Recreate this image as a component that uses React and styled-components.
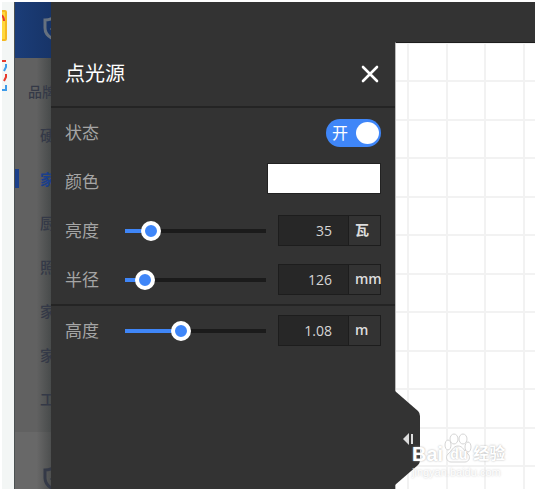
import { useState } from "react";
import styled, { createGlobalStyle } from "styled-components";

const NAV_ITEMS = ["硬", "家", "厨", "照", "家", "家", "工"];

const SLIDERS = [
  { id: "brightness", label: "亮度", value: "35", unit: "瓦", position: 13 },
  { id: "radius", label: "半径", value: "126", unit: "mm", position: 8 },
];

const ShieldIcon = () => (
  <svg width="28" height="28" viewBox="0 0 28 28" fill="none" stroke="currentColor" strokeWidth="3">
    <path d="M14 2 C10 5 6 6 3 6 V14 C3 20 8 24 14 26 C20 24 25 20 25 14 V6 C22 6 18 5 14 2 Z" />
    <path d="M9 14 L13 18 L20 10" />
  </svg>
);

const SliderRow = ({ id, label, value, unit, position }) => {
  const [percent, setPercent] = useState(position);
  const [amount, setAmount] = useState(value);

  return (
    <Row>
      <Label htmlFor={id}>{label}</Label>
      <Range
        id={id}
        type="range"
        min="0"
        max="100"
        value={percent}
        onChange={(e) => setPercent(e.target.value)}
        style={{ "--fill": `${percent}%` }}
      />
      <Field>
        <NumberInput
          aria-label={label}
          value={amount}
          onChange={(e) => setAmount(e.target.value)}
        />
        <Unit>{unit}</Unit>
      </Field>
    </Row>
  );
};

const App = () => {
  const [on, setOn] = useState(true);
  const [color, setColor] = useState("#ffffff");

  return (
    <>
      <GlobalStyle />
      <Page>
        <Dock>
          <svg width="12" height="100" viewBox="0 0 12 100">
            <rect x="-14" y="9" width="18" height="29" rx="1" fill="#ffd83d" stroke="#f5b921" strokeWidth="2" />
            <path d="M-1 13 C1 14 2 16 2 19" fill="none" stroke="#e8392c" strokeWidth="2" />
            <path d="M0 59 H4" stroke="#e8392c" strokeWidth="2" />
            <path d="M4 62 V65 L2 69" fill="none" stroke="#3d9be9" strokeWidth="2" />
            <path d="M4 72 V75 L2 79" fill="none" stroke="#e8392c" strokeWidth="2" />
            <path d="M4 83 V88 H0" fill="none" stroke="#3d9be9" strokeWidth="2" />
          </svg>
        </Dock>
        <Sidebar>
          <Brand>
            <ShieldIcon />
          </Brand>
          <Nav>
            <NavTitle>品牌</NavTitle>
            {NAV_ITEMS.map((item, index) => (
              <NavLink key={index} href="#" $active={index === 1}>
                {item}
              </NavLink>
            ))}
          </Nav>
          <SidebarFooter>
            <ShieldIcon />
          </SidebarFooter>
        </Sidebar>
        <Workspace>
          <TopBar />
          <Panel>
            <PanelHeader>
              <Title>点光源</Title>
              <CloseButton aria-label="关闭">
                <svg width="18" height="18" viewBox="0 0 18 18">
                  <path d="M2 2 L16 16 M16 2 L2 16" stroke="#fff" strokeWidth="2.6" strokeLinecap="round" />
                </svg>
              </CloseButton>
            </PanelHeader>
            <Section>
              <Row>
                <Label htmlFor="state">状态</Label>
                <Switch $on={on}>
                  <input
                    id="state"
                    type="checkbox"
                    checked={on}
                    onChange={(e) => setOn(e.target.checked)}
                  />
                  <span>{on ? "开" : "关"}</span>
                  <Knob />
                </Switch>
              </Row>
              <Row>
                <Label htmlFor="color">颜色</Label>
                <ColorInput
                  id="color"
                  type="color"
                  value={color}
                  onChange={(e) => setColor(e.target.value)}
                />
              </Row>
              {SLIDERS.map((slider) => (
                <SliderRow key={slider.id} {...slider} />
              ))}
            </Section>
            <Section>
              <SliderRow id="height" label="高度" value="1.08" unit="m" position={38} />
            </Section>
          </Panel>
          <Canvas>
            <CollapseButton aria-label="收起">
              <svg width="25" height="98" viewBox="0 0 25 98">
                <path d="M0 0 L23 20 Q25 22 25 25 V69 Q25 72 23 74 L0 94 Z" fill="#333" />
                <path d="M8 48 L14 42 V54 Z" fill="#ddd" />
                <path d="M17 43 V53" stroke="#ddd" strokeWidth="2" />
              </svg>
            </CollapseButton>
            <Watermark>
              <WatermarkLogo>
                <span>Bai</span>
                <Paw>
                  <svg width="28" height="30" viewBox="0 0 28 30">
                    <ellipse cx="4" cy="12" rx="3" ry="5" />
                    <ellipse cx="10" cy="6" rx="4" ry="5" />
                    <ellipse cx="19" cy="6" rx="4" ry="5" />
                    <ellipse cx="24" cy="14" rx="3" ry="5" />
                    <path d="M14 13 C9 13 8 18 4 21 C1 24 3 29 7 29 H21 C25 29 27 24 24 21 C20 18 19 13 14 13 Z" />
                  </svg>
                  <span>du</span>
                </Paw>
                <WatermarkName>经验</WatermarkName>
              </WatermarkLogo>
              <WatermarkUrl>jingyan.baidu.com</WatermarkUrl>
            </Watermark>
          </Canvas>
        </Workspace>
      </Page>
    </>
  );
};

const GlobalStyle = createGlobalStyle`
  * {
    box-sizing: border-box;
  }

  body {
    margin: 0;
    background: #fff;
    font-family: "Open Sans", "Noto Sans CJK SC", sans-serif;
  }

  svg {
    display: block;
    flex-shrink: 0;
  }

  button,
  input {
    font-family: inherit;
  }
`;

const Page = styled.div`
  display: grid;
  grid-template-columns: 12px 37px 1fr;
  height: 100vh;
  padding: 2px;
`;

const Dock = styled.aside`
  background: #f3f6f5;
`;

const Sidebar = styled.aside`
  display: flex;
  flex-direction: column;
  min-height: 0;
  overflow: hidden;
  border-left: 1px solid #4b5152;
  background: #646464;
  color: #343947;
`;

const Brand = styled.div`
  flex-shrink: 0;
  height: 56px;
  padding: 12px 0 0 27px;
  background: linear-gradient(90deg, #1b3d78, #173468);
  color: #66717f;
`;

const Nav = styled.nav`
  display: flex;
  flex-direction: column;
  flex-shrink: 0;
  padding-bottom: 12px;
  background: linear-gradient(90deg, #616161 60%, #484b4b);
`;

const NavTitle = styled.div`
  height: 54px;
  padding-left: 13px;
  font-size: 14px;
  font-weight: 500;
  line-height: 68px;
  white-space: nowrap;
`;

const NavLink = styled.a`
  display: flex;
  align-items: center;
  height: 44px;
  padding-left: 25px;
  background: ${(props) =>
    props.$active ? "linear-gradient(#1b3f8a, #1b3f8a) 0 50% / 4px 19px no-repeat" : "none"};
  color: ${(props) => (props.$active ? "#1b3f8a" : "inherit")};
  font-size: 15px;
  font-weight: ${(props) => (props.$active ? 700 : 500)};
  text-decoration: none;
  white-space: nowrap;
`;

const SidebarFooter = styled.div`
  flex: 1;
  padding: 32px 0 0 27px;
  background: linear-gradient(90deg, #686868 60%, #4d4f4f);
`;

const Workspace = styled.main`
  display: grid;
  grid-template-columns: 344px 1fr;
  grid-template-rows: 40px 1fr;
  min-width: 0;
`;

const TopBar = styled.header`
  grid-column: 1 / -1;
  background: #333;
`;

const Panel = styled.section`
  background: #333;
`;

const PanelHeader = styled.header`
  display: flex;
  align-items: center;
  justify-content: space-between;
  height: 64px;
  padding: 0 16px 0 14px;
`;

const Title = styled.h1`
  margin: 0;
  color: #fff;
  font-size: 20px;
  font-weight: 400;
  line-height: 28px;
`;

const CloseButton = styled.button`
  padding: 0;
  border: 0;
  background: none;
  cursor: pointer;
`;

const Section = styled.div`
  padding: 0 14px;
  border-top: 2px solid #242424;
`;

const Row = styled.div`
  display: flex;
  align-items: center;
  height: 49px;
`;

const Label = styled.label`
  width: 60px;
  color: #a5a5a5;
  font-size: 17px;
  line-height: 24px;
`;

const Switch = styled.div`
  position: relative;
  display: flex;
  align-items: center;
  justify-content: space-between;
  width: 55px;
  height: 28px;
  margin-left: auto;
  padding: 0 2px 0 6px;
  border-radius: 14px;
  background: ${(props) => (props.$on ? "#3f86f8" : "#666")};
  color: #fff;
  font-size: 16px;
  line-height: 24px;

  input {
    position: absolute;
    inset: 0;
    width: 100%;
    height: 100%;
    margin: 0;
    opacity: 0;
    cursor: pointer;
  }
`;

const Knob = styled.i`
  width: 23px;
  height: 22px;
  border-radius: 50%;
  background: #fff;
`;

const ColorInput = styled.input`
  width: 114px;
  height: 31px;
  margin: 0 0 6px auto;
  padding: 0;
  border: 1px solid #222;
  background: none;

  &::-webkit-color-swatch-wrapper {
    padding: 0;
  }

  &::-webkit-color-swatch {
    border: 0;
  }
`;

const Range = styled.input`
  flex: 1;
  min-width: 0;
  height: 20px;
  margin: 0 12px 0 0;
  appearance: none;
  background: linear-gradient(#3f86f8, #3f86f8) 0 50% / var(--fill) 4px no-repeat,
    linear-gradient(#1b1b1b, #1b1b1b) 0 50% / 100% 4px no-repeat;

  &::-webkit-slider-thumb {
    appearance: none;
    width: 20px;
    height: 20px;
    border: 4px solid #fff;
    border-radius: 50%;
    background: #3f86f8;
  }
`;

const Field = styled.div`
  display: flex;
  width: 103px;
  height: 31px;
  border: 1px solid #1d1d1d;
`;

const NumberInput = styled.input`
  width: 70px;
  padding: 0 16px 0 0;
  border: 0;
  border-right: 1px solid #1d1d1d;
  background: #272727;
  color: #d5d5d5;
  font-size: 14px;
  text-align: right;
`;

const Unit = styled.span`
  padding-left: 6px;
  color: #ddd;
  font-size: 14px;
  font-weight: 600;
  line-height: 28px;
`;

const Canvas = styled.div`
  position: relative;
  border-top: 1px solid #1d1d1d;
  border-left: 1px solid #bbb;
  background: linear-gradient(90deg, #f2f2f2 2px, transparent 2px) 11px 0 / 77px 100%,
    linear-gradient(90deg, #f2f2f2 2px, transparent 2px) 50px 0 / 77px 100%,
    linear-gradient(#f2f2f2 2px, transparent 2px) 0 37px / 100% 77px,
    linear-gradient(#f2f2f2 2px, transparent 2px) 0 76px / 100% 77px, #fff;
`;

const CollapseButton = styled.button`
  position: absolute;
  bottom: 0;
  left: -1px;
  padding: 0;
  border: 0;
  background: none;
  cursor: pointer;
`;

const Watermark = styled.div`
  position: absolute;
  bottom: 10px;
  left: 16px;
  color: #fff;
  font-family: "Liberation Sans", "Noto Sans CJK SC", sans-serif;
  text-shadow: 0 0 2px #aaa;
`;

const WatermarkLogo = styled.div`
  display: flex;
  align-items: flex-end;
  height: 32px;
  font-size: 20px;
  font-weight: 700;
  line-height: 22px;
`;

const Paw = styled.span`
  position: relative;
  width: 30px;
  height: 32px;

  svg {
    margin-left: 1px;
    fill: #fff;
    stroke: #d5d5d5;
  }

  span {
    position: absolute;
    bottom: 0;
    left: 7px;
    font-size: 14px;
  }
`;

const WatermarkName = styled.span`
  font-size: 16px;
`;

const WatermarkUrl = styled.div`
  font-size: 11px;
  line-height: 14px;
  opacity: 0.7;
`;

export default App;
